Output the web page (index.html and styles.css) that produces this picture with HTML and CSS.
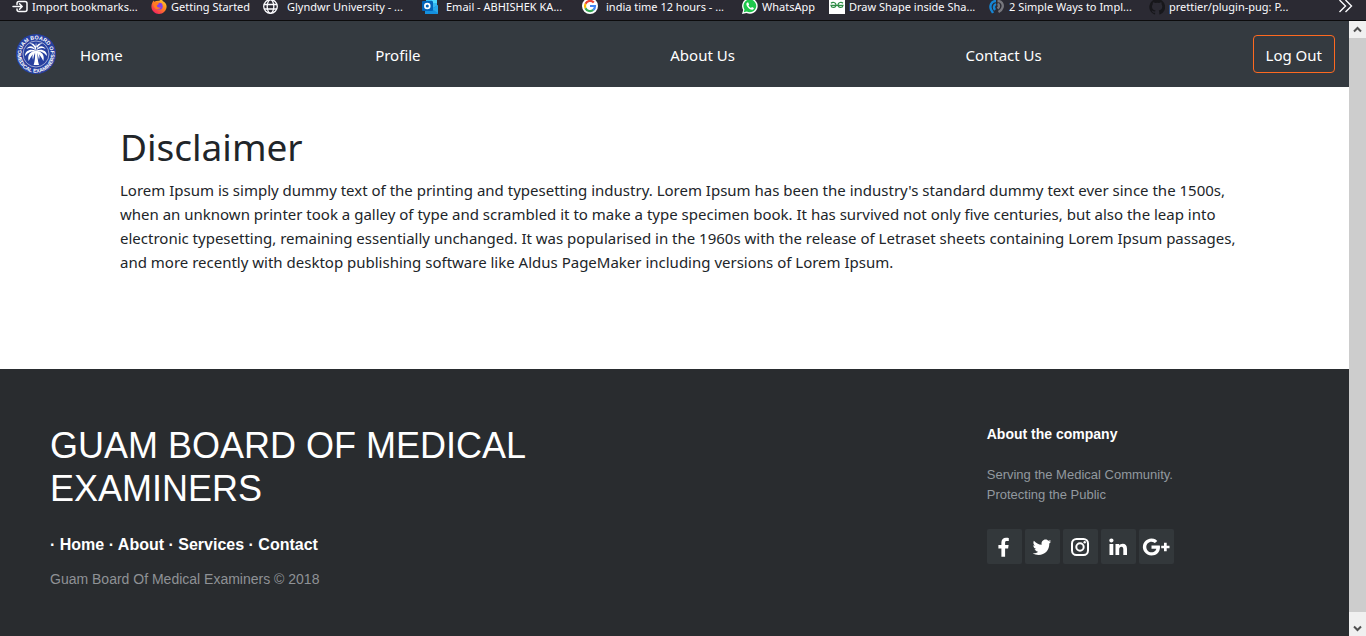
FILE: index.html
```html
<!DOCTYPE html>
<html lang="en">
<head>
  <meta charset="UTF-8" />
  <meta name="viewport" content="width=device-width, initial-scale=1.0" />
  <title>Guam Board Of Medical Examiners</title>
  <link rel="stylesheet" href="styles.css">
</head>
<body>
  <div class="bookmarks">
    <a href="#">
      <svg viewBox="0 0 16 16"><path d="M5 4.500V3.500a2 2 0 0 1 2-2h6a2 2 0 0 1 2 2v6a2 2 0 0 1-2 2H7a2 2 0 0 1-2-2v-.5M1 6.500h9M7.500 3.800l2.700 2.700-2.700 2.700" fill="none" stroke="#fbfbfe" stroke-width="1.500" stroke-linecap="round" stroke-linejoin="round"/></svg>
      <span>Import bookmarks...</span>
    </a>
    <a href="#">
      <svg viewBox="0 0 16 16">
        <defs><linearGradient id="fire" x1="1" y1="0" x2="0.300" y2="1"><stop offset="0" stop-color="#ffe83d"/><stop offset="0.500" stop-color="#ff8a1c"/><stop offset="1" stop-color="#f5235f"/></linearGradient></defs>
        <g transform="translate(0 -2)">
          <path d="M10 0c1 1 1.500 2 1.600 3C14 4 15.600 6 15.600 8.500 15.600 12.500 12 16 8 16S.4 12.700.4 8.500C.4 6 1.500 4 2.600 2.500l.6 1.300C5 3 7 2.500 8.500 3 8.500 2 9 .8 10 0z" fill="url(#fire)"/>
          <circle cx="8.300" cy="8.200" r="3.400" fill="#8140e8"/>
          <path d="M2.500 5c2-1.300 4-1 5.500.7L5.800 7.500c.3 2 2.200 2.700 4.200 1.500-.5 2-4 3-6 1.200C2.500 8.800 2 7 2.500 5z" fill="#ff7b22"/>
        </g>
      </svg>
      <span>Getting Started</span>
    </a>
    <a href="#" class="wide">
      <svg viewBox="0 0 16 16"><g fill="none" stroke="#fbfbfe" stroke-width="1.300"><circle cx="7.500" cy="6.500" r="6.800"/><ellipse cx="7.500" cy="6.500" rx="3.300" ry="6.800"/><path d="M1 4.500h13M1 9h13"/></g></svg>
      <span>Glyndwr University - ...</span>
    </a>
    <a href="#" class="wide">
      <svg viewBox="0 0 16 16"><path d="M4-2h11V8H4z" fill="#35b8f1"/><path d="M10-2h5v5h-5z" fill="#50d9ff"/><path d="M3 6l6 3 7-4v9H3z" fill="#1490df"/><path d="M10 9l6-4v8z" fill="#28a8ea"/><rect y="1" width="11" height="10" rx="1" fill="#0364b8"/><circle cx="5.300" cy="6" r="2.400" fill="none" stroke="#fff" stroke-width="1.700"/></svg>
      <span>Email - ABHISHEK KA...</span>
    </a>
    <a href="#" class="wide">
      <svg viewBox="0 0 16 16"><circle cx="8" cy="6" r="8" fill="#fff"/><g fill="none" stroke-width="2.200" transform="translate(0 -1)"><path d="M11.800 3.600A5 5 0 0 0 3.500 4.800" stroke="#ea4335"/><path d="M3.500 4.800a5 5 0 0 0 0 4.400" stroke="#fbbc05"/><path d="M3.500 9.200a5 5 0 0 0 7.800 1.700" stroke="#34a853"/><path d="M11.300 10.900A5 5 0 0 0 13 7H8" stroke="#4285f4"/></g></svg>
      <span>india time 12 hours - ...</span>
    </a>
    <a href="#">
      <svg viewBox="0 0 16 16"><g transform="translate(0 -1)"><path d="M0 15l1.200-4A7.800 7.800 0 1 1 4.500 14z" fill="#fff"/><path d="M1.700 13.300l.8-2.900a6.400 6.400 0 1 1 2.300 2.100z" fill="#1fc74c"/><path d="M5.200 3.500c-1.300 1-.9 2.700.2 4.200 1.500 2 3.800 3.600 5.600 2.900.8-.4 1-1 .8-1.600L10 8l-1 1C7.800 8.500 7 7.700 6.400 6.500l.7-1-.8-2z" fill="#fff"/></g></svg>
      <span>WhatsApp</span>
    </a>
    <a href="#">
      <svg viewBox="0 0 16 16"><path d="M0-2h16v16H0z" fill="#fff"/><path d="M2 3.200C3.500 1.800 7 2.200 7 5s-4.500 3.500-5 .3h12C13.500 8.500 9 7.800 9 5s3.500-3.200 5-1.800" fill="none" stroke="#2f8d46" stroke-width="1.200"/></svg>
      <span>Draw Shape inside Sha...</span>
    </a>
    <a href="#">
      <svg viewBox="0 0 16 16"><g fill="none" stroke-width="2.400"><path d="M7 1C2 1 .5 6 2 9.500L4 13M7 4C4.500 5 4.500 8 6 10" stroke="#1685d3"/><path d="M8.500 1c4 0 6 3 5 6.500-.5 2-2 3.500-4 4.500M8.500 4c2 .5 2 3 0 4.500" stroke="#77777d"/></g></svg>
      <span>2 Simple Ways to Impl...</span>
    </a>
    <a href="#">
      <svg viewBox="0 0 16 16"><path d="M8 -1a8 8 0 0 0-2.500 15.500c.4.100.6-.2.600-.4V12.700c-2.200.5-2.700-1-2.700-1-.4-.9-.9-1.200-.9-1.200 1.500-.2 1.700 1.500 3.600 1l.5-1c-3-.4-3.600-2-3.600-3.900 0-1 .3-1.700.8-2.300-.1-.7 0-1.500.2-2.100.8 0 1.500.4 2.200.8a8 8 0 0 1 4 0c.7-.4 1.400-.8 2.200-.8.200.7.300 1.400.1 2.100.5.600.8 1.300.8 2.300 0 2.300-1.300 3.600-3.600 3.900.4.400.6 1 .6 1.800v1.800c0 .3.200.5.600.4A8 8 0 0 0 8-1z" fill="#17171b"/></svg>
      <span>prettier/plugin-pug: P...</span>
    </a>
    <button type="button" class="more" aria-label="Show more bookmarks">
      <svg viewBox="0 0 16 16"><path d="M2.500 0l6 6-6 6M8.500 0l6 6-6 6" fill="none" stroke="#fbfbfe" stroke-width="1.400"/></svg>
    </button>
  </div>

  <div class="window">
    <div class="page">
      <nav class="navbar">
        <a href="#" class="brand" aria-label="Guam Board of Medical Examiners">
          <svg viewBox="0 0 120 120">
            <defs>
              <path id="top" d="M16 60a44 44 0 0 1 88 0"/>
              <path id="bottom" d="M4 60a56 56 0 0 0 112 0"/>
            </defs>
            <circle cx="60" cy="60" r="60" fill="#27409f"/>
            <circle cx="60" cy="60" r="39" fill="none" stroke="#d5daec" stroke-width="2"/>
            <g class="seal-text">
              <text><textPath href="#top" startOffset="50%">GUAM BOARD OF</textPath></text>
              <text><textPath href="#bottom" startOffset="50%">MEDICAL EXAMINERS</textPath></text>
            </g>
            <g fill="#fff">
              <path d="M57 50h7c0 17 1 30 5 43H53c4-13 5-26 4-43z"/>
              <path d="M60 50C54 37 41 31 31 45c10-5 20-3 29 5zM60 50c6-13 19-19 29-5-10-5-20-3-29 5zM60 50C45 43 27 48 27 66c10-12 20-15 33-16zM60 50c15-7 33-2 33 16-10-12-20-15-33-16zM59 50C43 52 33 62 38 81c6-12 12-20 21-31zM61 50c16 2 26 12 21 31-6-12-12-20-21-31zM59 50c-9 7-12 16-8 27 2-11 5-18 8-27zM61 50c9 7 12 16 8 27-2-11-5-18-8-27zM60 50c-4-11-11-19-20-22 14-3 21 8 20 22zM60 50c4-11 11-19 20-22-14-3-21 8-20 22zM57 49l3-24 4 24z"/>
            </g>
          </svg>
        </a>
        <ul class="nav-links">
          <li><a href="#">Home</a></li>
          <li><a href="#">Profile</a></li>
          <li><a href="#">About Us</a></li>
          <li><a href="#">Contact Us</a></li>
        </ul>
        <button type="button" class="logout">Log Out</button>
      </nav>

      <main class="disclaimer">
        <h1>Disclaimer</h1>
        <p>Lorem Ipsum is simply dummy text of the printing and typesetting industry. Lorem Ipsum has been the industry's standard dummy text ever since the 1500s, when an unknown printer took a galley of type and scrambled it to make a type specimen book. It has survived not only five centuries, but also the leap into electronic typesetting, remaining essentially unchanged. It was popularised in the 1960s with the release of Letraset sheets containing Lorem Ipsum passages, and more recently with desktop publishing software like Aldus PageMaker including versions of Lorem Ipsum.</p>
      </main>

      <footer class="footer">
        <div class="footer-left">
          <h3>GUAM BOARD OF MEDICAL EXAMINERS</h3>
          <p class="footer-links">
            · <a href="#">Home</a>
            · <a href="#">About</a>
            · <a href="#">Services</a>
            · <a href="#">Contact</a>
          </p>
          <p class="footer-name">Guam Board Of Medical Examiners © 2018</p>
        </div>
        <div class="footer-right">
          <h4>About the company</h4>
          <p>Serving the Medical Community.<br>Protecting the Public</p>
          <div class="social">
            <a href="#" aria-label="Facebook"><svg viewBox="0 0 20 20"><path d="M14.800.9v3.200h-1.900c-1.500 0-1.800.7-1.800 1.700v2.300h3.500l-.5 3.400h-3v8.200H7.400v-8.200h-3V8.100h3V5.500C7.400 2.500 9.300.7 12 .7c1.300 0 2.400.1 2.800.2z"/></svg></a>
            <a href="#" aria-label="Twitter"><svg viewBox="0 0 20 20"><path d="M19.200 4.500c-.5.800-1.200 1.400-1.900 2C17.500 13 13 18 6.600 18c-2.200 0-4.200-.6-5.900-1.700 2.100.2 4-.4 5.500-1.600-1.700 0-3.100-1.100-3.600-2.600.6.100 1.200.1 1.700-.1-1.800-.4-3-1.900-3-3.800.5.300 1.100.5 1.700.5C1.400 7.500.9 5.300 1.900 3.700c1.900 2.400 4.700 3.800 7.800 4C9 4.900 11 2.600 13.500 2.600c1.100 0 2.100.5 2.800 1.200.9-.2 1.700-.5 2.400-.9-.3.900-.9 1.600-1.700 2.100.8-.1 1.500-.3 2.200-.5z"/></svg></a>
            <a href="#" aria-label="Instagram"><svg viewBox="0 0 20 20"><g class="line"><rect x="2" y="2" width="16" height="16" rx="4.500"/><circle cx="10" cy="10" r="3.700"/></g><circle cx="14.700" cy="5.300" r="1.200"/></svg></a>
            <a href="#" aria-label="LinkedIn"><svg viewBox="0 0 20 20"><path d="M1.500 7h3.800v11H1.500zM3.400 1.600c1.300 0 2.100.8 2.100 1.900s-.8 1.900-2.100 1.900-2.100-.8-2.100-1.900.9-1.900 2.100-1.900zM7.500 7h3.700v1.500c.7-1 1.800-1.800 3.600-1.800 2.500 0 4.200 1.600 4.200 5V18h-3.700v-5.900c0-1.500-.5-2.400-1.900-2.400-1.300 0-2.200.9-2.200 2.400V18H7.500z"/></svg></a>
            <a href="#" aria-label="Google Plus"><svg viewBox="0 0 28 20" class="gplus"><path d="M9.500 8.400h8.300c.1.500.2 1 .2 1.600 0 5-3.400 8.500-8.500 8.500A8.500 8.500 0 1 1 15.300 3.900l-2.400 2.200c-.7-.6-1.800-1.400-3.400-1.400-2.900 0-5.200 2.400-5.200 5.300s2.300 5.300 5.200 5.300c3.300 0 4.600-2.300 4.800-3.600H9.500zM22 5.800h2.700v2.900h2.800v2.600h-2.800v2.900H22v-2.900h-2.800V8.700H22z"/></svg></a>
          </div>
        </div>
      </footer>
    </div>

    <div class="scrollbar">
      <button type="button" aria-label="Scroll up"><svg viewBox="0 0 9 7"><path d="M1 5.500L4.500 2 8 5.500"/></svg></button>
      <div class="thumb"></div>
      <button type="button" class="down" aria-label="Scroll down"><svg viewBox="0 0 9 7"><path d="M1 1.500L4.500 5 8 1.500"/></svg></button>
    </div>
  </div>
</body>
</html>
```
FILE: styles.css
```css
* {
  box-sizing: border-box;
}
body {
  margin: 0;
  min-height: 100vh;
  display: flex;
  flex-direction: column;
  font-family: "Noto Sans", sans-serif;
  font-size: 15px;
  line-height: 24px;
  color: #212529;
  background-color: #fff;
}
a {
  color: inherit;
  text-decoration: none;
}
button {
  font: inherit;
  cursor: pointer;
}

/* Browser bookmarks bar */
.bookmarks {
  display: grid;
  grid-template-columns: 139px 112px 159px 160px 160px 87px 160px 160px 1fr 16px;
  height: 21px;
  padding: 0 13px 0 12px;
  background-color: #2b2a33;
  border-bottom: 1px solid #0c0c0d;
  font-size: 11px;
  line-height: 14px;
  color: #fbfbfe;
  white-space: nowrap;
}
.bookmarks a {
  display: flex;
  gap: 4px;
}
.bookmarks .wide {
  gap: 8px;
}
.bookmarks svg {
  width: 16px;
  height: 16px;
  flex: none;
}
.more {
  padding: 0;
  border: none;
  background: none;
  height: 16px;
  line-height: 0;
}

.window {
  flex: 1;
  display: flex;
}
.page {
  flex: 1;
  display: flex;
  flex-direction: column;
}

/* Navbar */
.navbar {
  display: flex;
  align-items: center;
  padding: 13px 14px 13px 16px;
  background-color: #343a40;
  color: #fff;
}
.brand {
  margin-right: 16px;
  line-height: 0;
}
.brand svg {
  width: 40px;
  height: 40px;
}
.seal-text {
  font-family: "Liberation Sans", Arial, sans-serif;
  font-size: 16px;
  font-weight: bold;
  fill: #fff;
  text-anchor: middle;
}
.nav-links {
  flex: 1;
  display: flex;
  margin: 0;
  padding: 0;
  list-style: none;
}
.nav-links li {
  flex: 1;
}
.nav-links a {
  display: block;
  padding: 9px 8px 7px;
}
.logout {
  padding: 7px 12px 5px;
  border: 1px solid #fd6920;
  border-radius: 4px;
  background: none;
  color: #fff;
}

.disclaimer {
  padding: 36px 105px 95px 120px;
}
.disclaimer h1 {
  margin: 0 0 7px;
  font-size: 37px;
  line-height: 48px;
  font-weight: normal;
}
.disclaimer p {
  margin: 0;
}

/* Footer */
.footer {
  flex: 1;
  display: grid;
  grid-template-columns: 40% 1fr 25%;
  padding: 55px 50px 40px;
  background-color: #292c2f;
  font-family: "Liberation Sans", Arial, sans-serif;
  color: #fff;
}
.footer-right {
  grid-column: 3;
}
.footer h3 {
  margin: 0 0 23px;
  font-size: 36px;
  line-height: 43px;
  font-weight: normal;
}
.footer p {
  margin: 0;
}
.footer .footer-links {
  margin-bottom: 12px;
  font-size: 16px;
  font-weight: bold;
}
.footer .footer-name {
  font-size: 14px;
  line-height: 21px;
  color: #8f9296;
}
.footer h4 {
  margin: 0 0 21px;
  font-size: 14px;
  line-height: 20px;
}
.footer-right p {
  font-size: 13px;
  line-height: 20px;
  color: #92999f;
}
.social {
  display: flex;
  gap: 3px;
  margin-top: 24px;
}
.social a {
  display: flex;
  align-items: center;
  justify-content: center;
  width: 35px;
  height: 35px;
  border-radius: 2px;
  background-color: #33383b;
}
.social svg {
  width: 20px;
  height: 20px;
  fill: #fff;
}
.social .gplus {
  width: 28px;
}
.social .line {
  fill: none;
  stroke: #fff;
  stroke-width: 2;
}

/* Scrollbar */
.scrollbar {
  display: flex;
  flex-direction: column;
  width: 17px;
  background-color: #f0f0f0;
}
.scrollbar button {
  height: 17px;
  padding: 0;
  border: none;
  background: none;
  line-height: 0;
}
.scrollbar .down {
  height: 24px;
  padding-top: 8px;
}
.scrollbar svg {
  width: 9px;
  height: 7px;
  fill: none;
  stroke: #505050;
  stroke-width: 2;
}
.thumb {
  flex: 1;
  background-color: #cdcdcd;
}
```
